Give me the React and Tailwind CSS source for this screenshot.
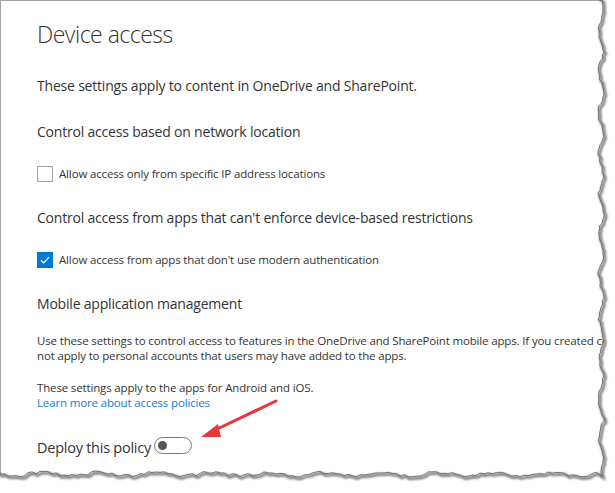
import React from "react";

function mulberry32(a) {
  return function () {
    a |= 0;
    a = (a + 0x6d2b79f5) | 0;
    let t = Math.imul(a ^ (a >>> 15), 1 | a);
    t = (t + Math.imul(t ^ (t >>> 7), 61 | t)) ^ t;
    return ((t ^ (t >>> 14)) >>> 0) / 4294967296;
  };
}

function buildEdge() {
  const r = mulberry32(7);
  const pts = [];
  for (let y = -5; y <= 472; y += 3) {
    const x = 601 + 2.2 * Math.sin(y / 6.5) + (r() * 2.4 - 1.2);
    pts.push([x, y]);
  }
  pts.push([602, 476]);
  for (let x = 596; x >= -5; x -= 4) {
    const y = 474 + 1.8 * Math.sin(x / 9) + (r() * 3 - 1.5);
    pts.push([x, y]);
  }
  return pts;
}

function TornEdge() {
  const pts = buildEdge();
  const line = pts.map((p, i) => (i === 0 ? "M" : "L") + p[0].toFixed(1) + "," + p[1].toFixed(1)).join(" ");
  const paper = "M-5,-5 " + line.replace(/^M/, "L") + " Z";
  const outside = "M-10,-10 H625 V503 H-10 Z " + paper;
  return (
    <svg className="pointer-events-none absolute left-0 top-0" width="615" height="493" viewBox="0 0 615 493">
      <defs>
        <filter id="blur" x="-10%" y="-10%" width="120%" height="120%">
          <feGaussianBlur stdDeviation="1.3" />
        </filter>
      </defs>
      <path d={outside} fill="#ffffff" fillRule="evenodd" />
      <path d={line} fill="none" stroke="#000" strokeOpacity="0.55" strokeWidth="2.6" filter="url(#blur)" transform="translate(1.6,1.8)" />
      <path d={line} fill="none" stroke="#6b6b6b" strokeWidth="0.9" />
    </svg>
  );
}

function Arrow() {
  return (
    <svg className="pointer-events-none absolute left-0 top-0" width="615" height="493" viewBox="0 0 615 493">
      <line x1="276" y1="401" x2="213" y2="431" stroke="#e8383b" strokeWidth="3" strokeLinecap="round" />
      <polygon points="201,437 218,424 221,437" fill="#e8383b" />
    </svg>
  );
}

export default function App() {
  const font = { fontFamily: '"Open Sans", "Noto Sans", sans-serif' };
  return (
    <div className="relative h-[493px] w-[615px] overflow-hidden bg-white" style={font}>
      <div className="h-[493px] w-[615px] overflow-hidden border-l border-t border-[#a3a3a3] pl-[36px] text-[#333333]">
        <div className="mt-[18px] text-[23px] font-light leading-[30px] tracking-[-0.5px] text-[#333333]">Device access</div>
        <div className="mt-[27px] text-[14px] leading-[20px] tracking-[-0.2px]">These settings apply to content in OneDrive and SharePoint.</div>
        <div className="mt-[26px] text-[14px] leading-[20px] tracking-[-0.2px]">Control access based on network location</div>
        <div className="mt-[22px] flex h-[20px] items-center gap-[6px]">
          <div className="h-[16px] w-[16px] border border-[#a6a6a6] bg-white" />
          <span className="text-[11.5px] tracking-[-0.15px]">Allow access only from specific IP address locations</span>
        </div>
        <div className="mt-[24px] text-[14px] leading-[20px] tracking-[-0.2px]">Control access from apps that can't enforce device-based restrictions</div>
        <div className="mt-[22px] flex h-[20px] items-center gap-[6px]">
          <div className="flex h-[16px] w-[16px] items-center justify-center bg-[#0078d4]">
            <svg width="10" height="8" viewBox="0 0 10 8">
              <path d="M1 4.2 L3.7 6.8 L9 1.2" fill="none" stroke="#ffffff" strokeWidth="1.2" />
            </svg>
          </div>
          <span className="text-[11.5px] tracking-[-0.15px]">Allow access from apps that don't use modern authentication</span>
        </div>
        <div className="mt-[24px] text-[14px] leading-[20px] tracking-[-0.2px]">Mobile application management</div>
        <div className="mt-[19px] whitespace-nowrap text-[11.5px] leading-[15px] tracking-[-0.15px]">
          <div>Use these settings to control access to features in the OneDrive and SharePoint mobile apps. If you created conditional access policies in Intune, these settings will take precedence. These settings do</div>
          <div>not apply to personal accounts that users may have added to the apps.</div>
        </div>
        <div className="mt-[17px] text-[11.5px] leading-[15px] tracking-[-0.15px]">
          <div>These settings apply to the apps for Android and iOS.</div>
          <div className="text-[#0f7ad8]">Learn more about access policies</div>
        </div>
        <div className="mt-[28px] flex h-[20px] items-center gap-[3px]">
          <span className="text-[14.5px] leading-[20px] tracking-[-0.25px]">Deploy this policy</span>
          <div className="mb-[6px] flex h-[17px] w-[38px] items-center rounded-full border border-[#7a7a7a] px-[3px]">
            <div className="h-[9px] w-[9px] rounded-full bg-[#555555]" />
          </div>
        </div>
      </div>
      <Arrow />
      <TornEdge />
    </div>
  );
}
